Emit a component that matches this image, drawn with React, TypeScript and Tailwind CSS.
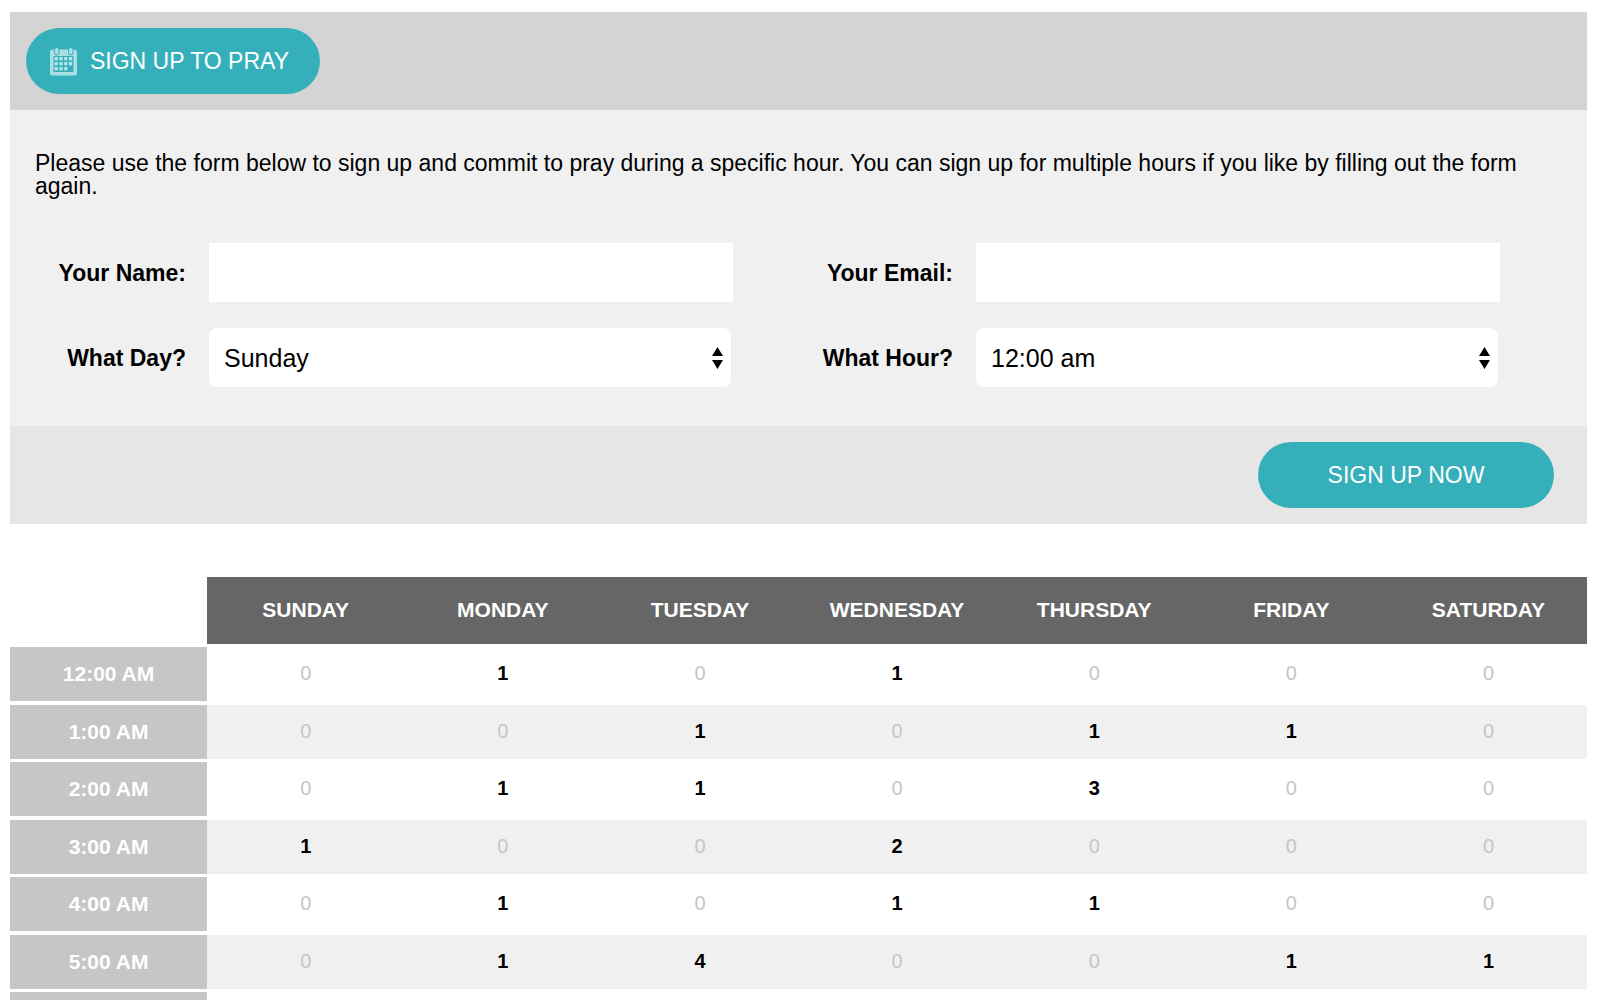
import type { ReactNode } from "react"

const days = [
  "Sunday",
  "Monday",
  "Tuesday",
  "Wednesday",
  "Thursday",
  "Friday",
  "Saturday",
]

const schedule = [
  { hour: "12:00 am", counts: [0, 1, 0, 1, 0, 0, 0] },
  { hour: "1:00 am", counts: [0, 0, 1, 0, 1, 1, 0] },
  { hour: "2:00 am", counts: [0, 1, 1, 0, 3, 0, 0] },
  { hour: "3:00 am", counts: [1, 0, 0, 2, 0, 0, 0] },
  { hour: "4:00 am", counts: [0, 1, 0, 1, 1, 0, 0] },
  { hour: "5:00 am", counts: [0, 1, 4, 0, 0, 1, 1] },
]

function CalendarIcon() {
  return (
    <svg width="27" height="29" viewBox="0 0 27 29" aria-hidden="true">
      <rect x="0" y="2.5" width="27" height="26" rx="2.5" fill="#a9dee2" />
      <rect x="3.5" y="9" width="20" height="16" fill="#35b0bb" />
      <g fill="#a9dee2" stroke="#35b0bb">
        <rect x="4.5" y="0.5" width="4.5" height="7.5" rx="2.2" />
        <rect x="18.5" y="0.5" width="4.5" height="7.5" rx="2.2" />
      </g>
      <g fill="#b9e5e8">
        {[0, 1, 2].map((row) =>
          [0, 1, 2, 3]
            .filter((col) => row < 2 || col < 3)
            .map((col) => (
              <rect
                key={`${row}-${col}`}
                x={4.6 + col * 4.8}
                y={10 + row * 5}
                width="3.2"
                height="3.4"
              />
            ))
        )}
      </g>
    </svg>
  )
}

interface FieldProps {
  id: string
  label: string
  children: ReactNode
}

function Field({ id, label, children }: FieldProps) {
  return (
    <div className="flex items-center gap-[23px]">
      <label
        htmlFor={id}
        className="w-[152px] shrink-0 pt-[2px] text-right font-bold"
      >
        {label}
      </label>
      {children}
    </div>
  )
}

interface SelectProps {
  id: string
  options: string[]
}

function Select({ id, options }: SelectProps) {
  return (
    <div className="relative mr-[2px] min-w-0 flex-1">
      <select
        id={id}
        className="h-[59px] w-full appearance-none rounded-lg bg-white px-[15px] text-[25px] leading-[32px]"
      >
        {options.map((option) => (
          <option key={option}>{option}</option>
        ))}
      </select>
      <svg
        className="pointer-events-none absolute top-[19px] right-2"
        width="11"
        height="22"
        viewBox="0 0 11 22"
        aria-hidden="true"
      >
        <path d="M5.5 0 11 9H0zM5.5 22 0 13h11z" />
      </svg>
    </div>
  )
}

export default function App() {
  return (
    <main className="bg-white pt-3 pr-[13px] pl-[10px] font-['Liberation_Sans',Arial,sans-serif] text-[23px] leading-[23px] text-black">
      <form>
        <div className="bg-[#d4d4d4] p-4">
          <button
            type="button"
            className="flex h-[66px] items-center gap-[13px] rounded-full bg-[#35b0bb] pr-[31px] pl-6 text-white uppercase"
          >
            <CalendarIcon />
            Sign up to pray
          </button>
        </div>

        <div className="bg-[#f0f0f0] pt-[42px] pb-[39px]">
          <p className="px-[25px]">
            Please use the form below to sign up and commit to pray during a
            specific hour. You can sign up for multiple hours if you like by
            filling out the form again.
          </p>

          <div className="mt-[45px] grid grid-cols-2 gap-x-[68px] gap-y-[26px] pr-[87px] pl-[24px]">
            <Field id="name" label="Your Name:">
              <input
                id="name"
                type="text"
                className="h-[59px] min-w-0 flex-1 bg-white px-[15px] text-[25px]"
              />
            </Field>
            <Field id="email" label="Your Email:">
              <input
                id="email"
                type="email"
                className="h-[59px] min-w-0 flex-1 bg-white px-[15px] text-[25px]"
              />
            </Field>
            <Field id="day" label="What Day?">
              <Select id="day" options={days} />
            </Field>
            <Field id="hour" label="What Hour?">
              <Select id="hour" options={schedule.map((row) => row.hour)} />
            </Field>
          </div>
        </div>

        <div className="flex justify-end bg-[#e6e6e6] py-4 pr-[33px]">
          <button
            type="submit"
            className="h-[66px] w-[296px] rounded-full bg-[#35b0bb] text-white uppercase"
          >
            Sign up now
          </button>
        </div>
      </form>

      <table className="mt-[53px] w-full table-fixed border-separate border-spacing-0 text-center">
        <thead>
          <tr className="h-[70px] text-[21px] text-white uppercase">
            <td />
            {days.map((day) => (
              <th
                key={day}
                scope="col"
                className="border-b-3 border-white bg-[#666] p-0 pb-[2px]"
              >
                {day}
              </th>
            ))}
          </tr>
        </thead>
        <tbody>
          {schedule.map(({ hour, counts }) => (
            <tr
              key={hour}
              className="group odd:h-[58px] even:h-[57px] even:bg-[#f0f0f0]"
            >
              <th
                scope="row"
                className="border-white bg-[#c6c6c6] p-0 pb-[2px] text-[21px] text-white uppercase group-odd:border-b-4 group-even:border-b-3"
              >
                {hour}
              </th>
              {counts.map((count, i) => (
                <td
                  key={days[i]}
                  className={
                    count > 0
                      ? "border-white p-0 pb-[2px] text-[20px] font-bold group-odd:border-b-4 group-even:border-b-3"
                      : "border-white p-0 pb-[2px] text-[20px] text-[#c6c6c6] group-odd:border-b-4 group-even:border-b-3"
                  }
                >
                  {count}
                </td>
              ))}
            </tr>
          ))}
          <tr className="h-2">
            <th className="bg-[#c6c6c6] p-0" />
            <td colSpan={7} />
          </tr>
        </tbody>
      </table>
    </main>
  )
}
